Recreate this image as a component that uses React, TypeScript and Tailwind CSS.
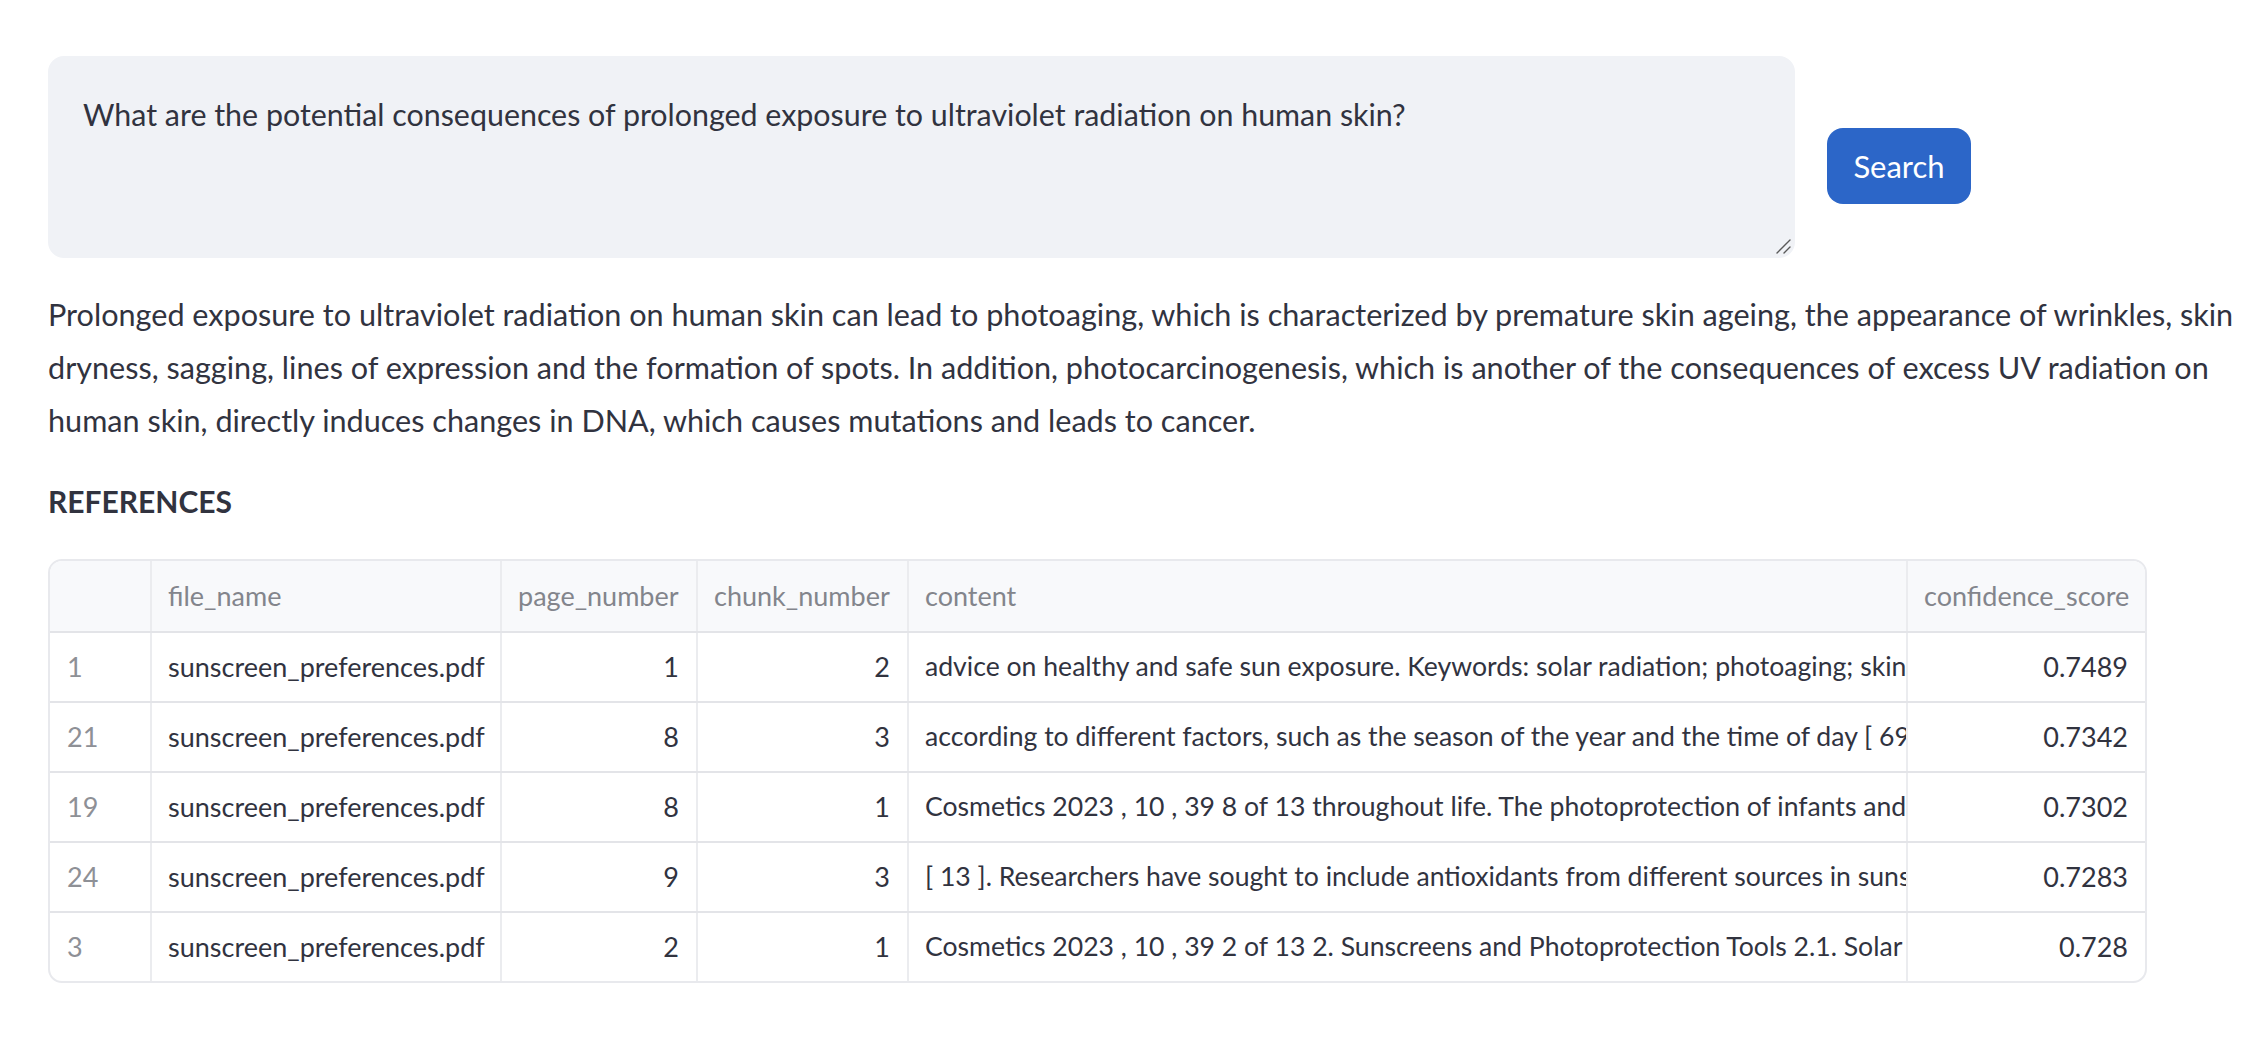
import React from 'react'

const rows = [
  { idx: 1, page: 1, chunk: 2, score: '0.7489', content: 'advice on healthy and safe sun exposure. Keywords: solar radiation; photoaging; skin cancer' },
  { idx: 21, page: 8, chunk: 3, score: '0.7342', content: 'according to different factors, such as the season of the year and the time of day [ 69 ].' },
  { idx: 19, page: 8, chunk: 1, score: '0.7302', content: 'Cosmetics 2023 , 10 , 39 8 of 13 throughout life. The photoprotection of infants and children' },
  { idx: 24, page: 9, chunk: 3, score: '0.7283', content: '[ 13 ]. Researchers have sought to include antioxidants from different sources in sunscreens' },
  { idx: 3, page: 2, chunk: 1, score: '0.728', content: 'Cosmetics 2023 , 10 , 39 2 of 13 2. Sunscreens and Photoprotection Tools 2.1. Solar Radiation' },
]

const cols = 'grid grid-cols-[102px_350px_196px_211px_999px_237px]'

export default function App() {
  return (
    <div className="min-h-screen bg-white px-[48px] pt-[56px] font-['Lato',sans-serif] text-[#31333f]">
      {/* query + search */}
      <div className="flex items-start gap-[32px]">
        <div className="relative w-[1747px]">
          <textarea
            className="block h-[202px] w-full resize-none rounded-[16px] border-2 border-[#f0f2f6] bg-[#f0f2f6] px-[33px] py-[31px] text-[30.4px] leading-[51px] text-[#31333f] outline-none"
            defaultValue="What are the potential consequences of prolonged exposure to ultraviolet radiation on human skin?"
          />
          <svg className="pointer-events-none absolute bottom-[4px] right-[4px] h-[15px] w-[15px]" viewBox="0 0 15 15">
            <path d="M1 14 L14 1 M8 14 L14 8" stroke="#5a5a5a" strokeWidth="1.4" strokeLinecap="round" />
          </svg>
        </div>
        <button className="mt-[72px] h-[76px] w-[144px] rounded-[16px] bg-[#2c66c8] text-[31px] text-white">
          Search
        </button>
      </div>

      {/* answer */}
      <p className="mt-[30px] whitespace-nowrap text-[30.6px] leading-[53px]">
        Prolonged exposure to ultraviolet radiation on human skin can lead to photoaging, which is characterized by premature skin ageing, the appearance of wrinkles, skin
        <br />
        dryness, sagging, lines of expression and the formation of spots. In addition, photocarcinogenesis, which is another of the consequences of excess UV radiation on
        <br />
        human skin, directly induces changes in DNA, which causes mutations and leads to cancer.
      </p>

      <p className="mt-[29px] text-[30px] font-bold leading-[51px]">REFERENCES</p>

      {/* references table */}
      <div className="mt-[32px] w-[2099px] overflow-hidden rounded-[14px] border-2 border-[#e8e9ed] text-[27px]">
        <div className={`${cols} h-[72px] border-b-2 border-[#e3e4e8] bg-[#f8f9fb] text-[#83858c]`}>
          <div className="border-r-2 border-[#ebecef]" />
          <div className="flex items-center border-r-2 border-[#ebecef] px-[16px]">file_name</div>
          <div className="flex items-center border-r-2 border-[#ebecef] px-[16px]">page_number</div>
          <div className="flex items-center border-r-2 border-[#ebecef] px-[16px]">chunk_number</div>
          <div className="flex items-center border-r-2 border-[#ebecef] px-[16px]">content</div>
          <div className="flex items-center px-[16px]">confidence_score</div>
        </div>
        {rows.map((r, i) => (
          <div
            key={r.idx}
            className={`${cols} ${i < rows.length - 1 ? 'h-[70px] border-b-2 border-[#e3e4e8]' : 'h-[68px]'}`}
          >
            <div className="flex items-center border-r-2 border-[#ebecef] px-[17px] text-[#8e9096]">{r.idx}</div>
            <div className="flex items-center border-r-2 border-[#ebecef] px-[16px]">sunscreen_preferences.pdf</div>
            <div className="flex items-center justify-end border-r-2 border-[#ebecef] px-[17px]">{r.page}</div>
            <div className="flex items-center justify-end border-r-2 border-[#ebecef] px-[17px]">{r.chunk}</div>
            <div className="flex items-center overflow-hidden whitespace-nowrap border-r-2 border-[#ebecef] pl-[16px] text-[26.6px]">
              <span className="block overflow-hidden">{r.content}</span>
            </div>
            <div className="flex items-center justify-end px-[17px]">{r.score}</div>
          </div>
        ))}
      </div>
    </div>
  )
}
